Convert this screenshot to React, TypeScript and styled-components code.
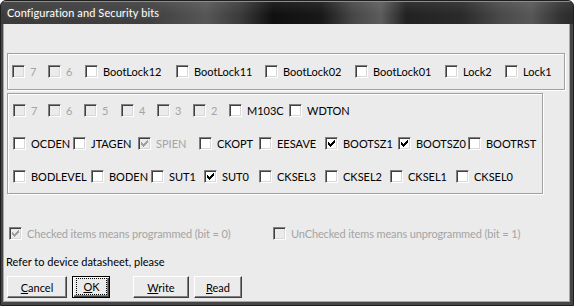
import React from 'react';
import styled, { createGlobalStyle, css } from 'styled-components';

const Global = createGlobalStyle`
  html, body { margin: 0; padding: 0; background: #ffffff; }
  body {
    font-family: Lato, "DejaVu Sans Condensed", sans-serif;
    font-size: 11px;
  }
`;

const Window = styled.div`
  width: 574px;
  height: 306px;
  box-sizing: border-box;
  display: flex;
  flex-direction: column;
  border: 1px solid #1e1e1e;
  border-radius: 6px 6px 0 0;
  background: #464646;
  overflow: hidden;
`;

const TitleBar = styled.div`
  height: 23px;
  flex: none;
  display: flex;
  align-items: center;
  padding-left: 6px;
  color: #ffffff;
  font-family: Lato, sans-serif;
  font-size: 11px;
  letter-spacing: 0.1px;
  text-shadow: 0 0 4px rgba(255, 255, 255, 0.25);
  box-shadow: inset 0 1px 0 #8c8c8c;
  background:
    linear-gradient(180deg, rgba(255, 255, 255, 0.08) 0%, rgba(255, 255, 255, 0) 60%),
    linear-gradient(90deg, #3b3b3b 0px, #404040 150px, #565656 205px, #3a3a3a 240px,
      #101010 272px, #181818 320px, #474747 352px, #5c5c5c 380px, #222222 405px,
      #2a2a2a 460px, #4a4a4a 500px, #575757 530px, #323232 560px, #2a2a2a 574px);
`;

const Body = styled.div`
  flex: 1;
  margin: 0 3px 3px 2px;
  background: #ebebeb;
  border: 1px solid #a8a8a8;
  border-top: none;
  display: flex;
  flex-direction: column;
  align-items: flex-start;
  padding: 29px 0 0 0;
  box-sizing: border-box;
`;

const Group = styled.div<{ $w: number; $h: number; $mt: number; $pl: number }>`
  width: ${p => p.$w}px;
  height: ${p => p.$h}px;
  margin: ${p => p.$mt}px 0 0 3px;
  padding-left: ${p => p.$pl}px;
  box-sizing: border-box;
  border: 1px solid #a0a0a0;
  box-shadow: inset 1px 1px 0 #ffffff, 1px 1px 0 #ffffff;
  display: flex;
  flex-direction: column;
  justify-content: center;
  gap: 20px;
`;

const Row = styled.div`
  display: flex;
  align-items: center;
  height: 13px;
`;

const Item = styled.label<{ $w?: number }>`
  display: flex;
  align-items: center;
  flex: none;
  width: ${p => (p.$w ? `${p.$w}px` : 'auto')};
  height: 13px;
`;

const Box = styled.span<{ $disabled?: boolean }>`
  width: 13px;
  height: 13px;
  box-sizing: border-box;
  flex: none;
  display: flex;
  align-items: flex-start;
  border: 1px solid;
  border-color: #808080 #ffffff #ffffff #808080;
  box-shadow: inset 1px 1px 0 #404040, inset -1px -1px 0 #d8d8d8;
  background: ${p => (p.$disabled ? '#ebebeb' : '#ffffff')};
`;

const Check = styled.svg`
  margin: 2px 0 0 2px;
  display: block;
`;

const Label = styled.span<{ $disabled?: boolean; $tight?: boolean }>`
  margin-left: 5px;
  line-height: 13px;
  white-space: nowrap;
  letter-spacing: ${p => (p.$tight ? '-0.13px' : 'normal')};
  color: ${p => (p.$disabled ? '#a4a4a4' : '#000000')};
`;

const Legend = styled.div`
  display: flex;
  align-items: center;
  margin: 33px 0 0 5px;
  height: 13px;
`;

const Note = styled.div`
  margin: 15px 0 0 2px;
  line-height: 13px;
  color: #000000;
`;

const Buttons = styled.div`
  display: flex;
  margin: 8px 0 0 3px;
`;

const Button = styled.button<{ $w: number; $ml: number; $default?: boolean }>`
  width: ${p => p.$w}px;
  height: 22px;
  margin: 0 0 0 ${p => p.$ml}px;
  padding: 0;
  box-sizing: border-box;
  font: inherit;
  color: #000000;
  background: #ebebeb;
  border: 1px solid;
  border-color: #ffffff #404040 #404040 #ffffff;
  box-shadow: inset -1px -1px 0 #808080;
  display: flex;
  align-items: center;
  justify-content: center;
  ${p =>
    p.$default &&
    css`
      border: 1px solid #000000;
      box-shadow: inset 1px 1px 0 #ffffff, inset -1px -1px 0 #404040, inset -2px -2px 0 #808080;
      align-items: stretch;
    `}
`;

const Focus = styled.span`
  flex: 1;
  margin: 1px 2px 2px 3px;
  border: 1px dotted #000000;
  display: flex;
  align-items: center;
  justify-content: center;
`;

type Bit = { label: string; w?: number; checked?: boolean; disabled?: boolean; tight?: boolean };

const CheckBox: React.FC<Bit> = ({ label, w, checked, disabled, tight }) => (
  <Item $w={w}>
    <Box $disabled={disabled}>
      {checked && (
        <Check width="7" height="7" viewBox="0 0 7 7" shapeRendering="crispEdges">
          <path
            d="M0 2h1v3H0z M1 3h1v3H1z M2 4h1v3H2z M3 3h1v3H3z M4 2h1v3H4z M5 1h1v3H5z M6 0h1v3H6z"
            fill={disabled ? '#a0a0a0' : '#000000'}
          />
        </Check>
      )}
    </Box>
    <Label $disabled={disabled} $tight={tight}>
      {label}
    </Label>
  </Item>
);

const lockRow: Bit[] = [
  { label: '7', w: 36, disabled: true },
  { label: '6', w: 37, disabled: true },
  { label: 'BootLock12', w: 91 },
  { label: 'BootLock11', w: 89 },
  { label: 'BootLock02', w: 90 },
  { label: 'BootLock01', w: 90 },
  { label: 'Lock2', w: 60 },
  { label: 'Lock1' },
];

const fuseRows: Bit[][] = [
  [
    { label: '7', w: 35, disabled: true },
    { label: '6', w: 36, disabled: true },
    { label: '5', w: 37, disabled: true },
    { label: '4', w: 36, disabled: true },
    { label: '3', w: 36, disabled: true },
    { label: '2', w: 36, disabled: true },
    { label: 'M103C', w: 60 },
    { label: 'WDTON' },
  ],
  [
    { label: 'OCDEN', w: 60 },
    { label: 'JTAGEN', w: 65 },
    { label: 'SPIEN', w: 61, checked: true, disabled: true },
    { label: 'CKOPT', w: 60 },
    { label: 'EESAVE', w: 66 },
    { label: 'BOOTSZ1', w: 73, checked: true },
    { label: 'BOOTSZ0', w: 70, checked: true },
    { label: 'BOOTRST' },
  ],
  [
    { label: 'BODLEVEL', w: 78 },
    { label: 'BODEN', w: 60 },
    { label: 'SUT1', w: 53 },
    { label: 'SUT0', w: 55, checked: true },
    { label: 'CKSEL3', w: 66 },
    { label: 'CKSEL2', w: 65 },
    { label: 'CKSEL1', w: 66 },
    { label: 'CKSEL0' },
  ],
];

export default function App() {
  return (
    <>
      <Global />
      <Window>
        <TitleBar>Configuration and Security bits</TitleBar>
        <Body>
          <Group $w={558} $h={37} $mt={0} $pl={4}>
            <Row>
              {lockRow.map((b, i) => (
                <CheckBox key={i} {...b} />
              ))}
            </Row>
          </Group>
          <Group $w={536} $h={101} $mt={3} $pl={5}>
            {fuseRows.map((row, r) => (
              <Row key={r}>
                {row.map((b, i) => (
                  <CheckBox key={i} {...b} />
                ))}
              </Row>
            ))}
          </Group>
          <Legend>
            <CheckBox label="Checked items means programmed (bit = 0)" w={264} checked disabled tight />
            <CheckBox label="UnChecked items means unprogrammed (bit = 1)" disabled tight />
          </Legend>
          <Note>Refer to device datasheet, please</Note>
          <Buttons>
            <Button $w={60} $ml={0}>
              <span>
                <u>C</u>ancel
              </span>
            </Button>
            <Button $w={38} $ml={5} $default>
              <Focus>
                <span>
                  <u>O</u>K
                </span>
              </Focus>
            </Button>
            <Button $w={56} $ml={23}>
              <span>
                <u>W</u>rite
              </span>
            </Button>
            <Button $w={48} $ml={5}>
              <span>
                <u>R</u>ead
              </span>
            </Button>
          </Buttons>
        </Body>
      </Window>
    </>
  );
}
